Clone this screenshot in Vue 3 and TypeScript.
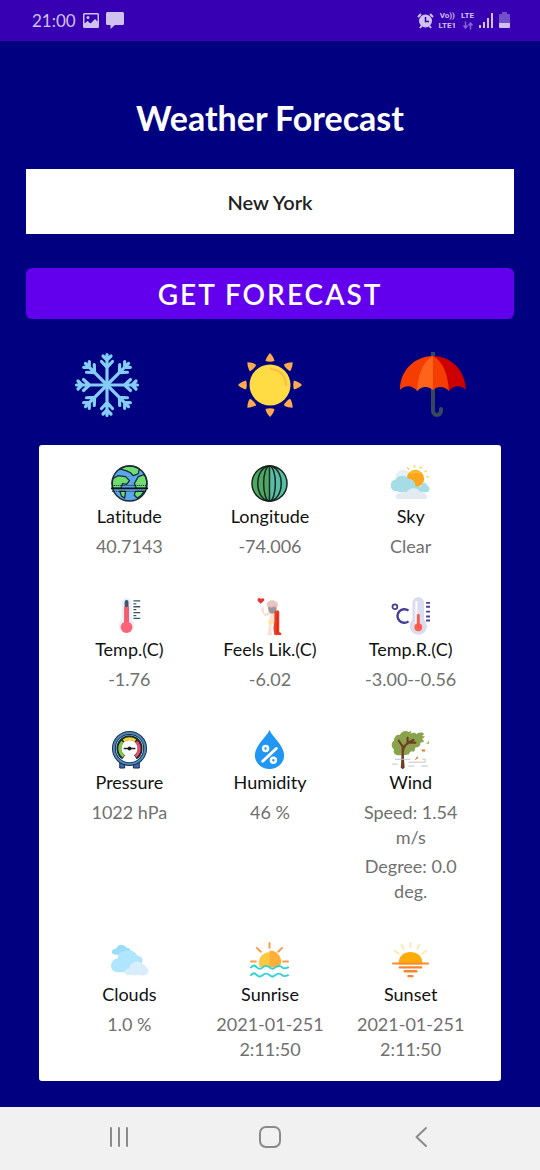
<script setup lang="ts">
import { ref } from 'vue'

type IconName =
  | 'latitude' | 'longitude' | 'sky' | 'temp' | 'feels' | 'range'
  | 'pressure' | 'humidity' | 'wind' | 'clouds' | 'sunrise' | 'sunset'

interface Reading {
  icon: IconName
  label: string
  values: string[][]
}

const city = ref('New York')

const readings: Reading[] = [
  { icon: 'latitude', label: 'Latitude', values: [['40.7143']] },
  { icon: 'longitude', label: 'Longitude', values: [['-74.006']] },
  { icon: 'sky', label: 'Sky', values: [['Clear']] },
  { icon: 'temp', label: 'Temp.(C)', values: [['-1.76']] },
  { icon: 'feels', label: 'Feels Lik.(C)', values: [['-6.02']] },
  { icon: 'range', label: 'Temp.R.(C)', values: [['-3.00--0.56']] },
  { icon: 'pressure', label: 'Pressure', values: [['1022 hPa']] },
  { icon: 'humidity', label: 'Humidity', values: [['46 %']] },
  { icon: 'wind', label: 'Wind', values: [['Speed: 1.54', 'm/s'], ['Degree: 0.0', 'deg.']] },
  { icon: 'clouds', label: 'Clouds', values: [['1.0 %']] },
  { icon: 'sunrise', label: 'Sunrise', values: [['2021-01-251', '2:11:50']] },
  { icon: 'sunset', label: 'Sunset', values: [['2021-01-251', '2:11:50']] },
]

const eighths = [0, 45, 90, 135, 180, 225, 270, 315]
</script>

<template>
  <div class="screen">
    <header class="status">
      <div class="status-side">
        <span class="clock">21:00</span>
        <svg class="s-photo" viewBox="0 0 16 16" aria-hidden="true">
          <path fill="currentColor" fill-rule="evenodd" d="M1.500 0h13A1.500 1.500 0 0 1 16 1.500v12a1.500 1.500 0 0 1-1.500 1.500h-13A1.500 1.500 0 0 1 0 13.500v-12A1.500 1.500 0 0 1 1.500 0zM1.500 1.500v9L4.500 8l3 2.500L12 6l2.500 2.500v-7zM5 3a1.500 1.500 0 1 1 0 3a1.500 1.500 0 0 1 0-3z" />
        </svg>
        <svg class="s-chat" viewBox="0 0 18 17" aria-hidden="true">
          <path fill="currentColor" d="M1.500 0h15A1.500 1.500 0 0 1 18 1.500v10a1.500 1.500 0 0 1-1.500 1.500H9l-4.500 4v-4h-3A1.500 1.500 0 0 1 0 11.500v-10A1.500 1.500 0 0 1 1.500 0z" />
        </svg>
      </div>
      <div class="status-side right">
        <svg class="s-alarm" viewBox="0 0 17 17" aria-hidden="true">
          <circle cx="8.500" cy="9" r="6.500" fill="currentColor" />
          <path d="M1 5l3-3M16 5l-3-3M4.500 14L3 16M12.500 14l1.500 2" stroke="currentColor" stroke-width="2" fill="none" />
          <path d="M8.500 5v4.500h3.500" stroke="#3700b3" stroke-width="1.500" fill="none" />
        </svg>
        <div class="carrier"><span>Vo))</span><span>LTE1</span></div>
        <div class="carrier">
          <span>LTE</span>
          <svg class="s-arrows" viewBox="0 0 12 8" aria-hidden="true">
            <path d="M3.500 0v6M1.500 4l2 2.500l2-2.500M8.500 8V1.500M6.500 4l2-2.500l2 2.500" fill="none" stroke="currentColor" stroke-width="1.500" />
          </svg>
        </div>
        <svg class="s-signal" viewBox="0 0 15 15" aria-hidden="true">
          <path fill="currentColor" d="M0 12h2v3H0zM4 9h2v6H4zM8 5h2v10H8zM12 0h2v15h-2z" />
        </svg>
        <svg class="s-battery" viewBox="0 0 11 17" aria-hidden="true">
          <path d="M3 0h5v2h2a1 1 0 0 1 1 1v8H0V3a1 1 0 0 1 1-1h2z" fill="currentColor" opacity=".4" />
          <path d="M0 11h11v4a1 1 0 0 1-1 1H1a1 1 0 0 1-1-1z" fill="currentColor" />
        </svg>
      </div>
    </header>

    <main class="content">
      <h1>Weather Forecast</h1>
      <input v-model="city" class="city" type="text" aria-label="City" />
      <button class="submit" type="button">GET FORECAST</button>

      <div class="hero">
        <svg viewBox="0 0 66 66" aria-hidden="true">
          <g fill="none" stroke="#84cdf5" stroke-width="3.200" stroke-linecap="round" stroke-linejoin="round">
            <path v-for="a in eighths" :key="a" :transform="`rotate(${a} 33 33)`" d="M33 33V2.500M29 4l4 4l4-4M27.500 9.500l5.500 6l5.500-6" />
          </g>
        </svg>
        <svg viewBox="0 0 66 66" aria-hidden="true">
          <path v-for="a in eighths" :key="a" :transform="`rotate(${a} 33 33)`" fill="#ffaa4d" d="M33 1C35 3 37 6 37.500 9C35 10 31 10 28.500 9C29 6 31 3 33 1z" />
          <circle cx="33" cy="33" r="20.500" fill="#ffdc43" />
          <path d="M34 17C44 18 49 25 49 33" fill="none" stroke="#ffb84a" stroke-width="2" stroke-linecap="round" />
        </svg>
        <svg viewBox="0 0 66 66" aria-hidden="true">
          <path d="M33 1v58a4 4 0 0 0 8 0v-2" fill="none" stroke="#34495e" stroke-width="4" stroke-linecap="round" />
          <path d="M0 36C1 16 17 4 33 4L28 34C23 33 20 35 17 39C12 33 5 33 0 38z" fill="#f53d00" />
          <path d="M33 4C49 4 65 16 66 38C61 33 54 33 49 39L43 20z" fill="#cc0000" />
          <path d="M33 4C22 10 18 24 17 39C22 34 28 34 33 38z" fill="#ff641a" />
          <path d="M33 4C44 10 48 24 49 39C44 34 38 34 33 38z" fill="#f53d00" />
        </svg>
      </div>

      <section class="card">
        <article v-for="item in readings" :key="item.label" class="cell">
          <svg v-if="item.icon === 'latitude'" viewBox="0 0 40 40" aria-hidden="true">
            <circle cx="20" cy="20" r="18" fill="#5ba6ea" />
            <g fill="#70dd73" stroke="#172a30" stroke-width="1.300" stroke-linejoin="round">
              <path d="M10 5C16 1 25 1 30 5l-1 5l-5 2l-3-3l-4-2z" />
              <path d="M3 15L8 12l8 1l4 4l-3 4l-4-1l-2 5H3C2 21 2 18 3 15z" />
              <path d="M29 13l6-2C38 15 38 21 37 25H27l-2-5z" />
              <path d="M10 28h6l-1 7l-3-2zM26 28h9c-2 4-5 6-7 7l-3-3z" />
            </g>
            <circle cx="20" cy="20" r="18" fill="none" stroke="#182a32" stroke-width="1.500" />
            <path d="M1 25h38" stroke="#111" stroke-width="2" /><path d="M2 22h36M2 28h36" stroke="#111" stroke-width="1" stroke-dasharray="1 1" />
          </svg>

          <svg v-else-if="item.icon === 'longitude'" viewBox="0 0 40 40" aria-hidden="true">
            <circle cx="20" cy="20" r="18" fill="#4fa764" />
            <path d="M20 2a18 18 0 0 1 0 36z" fill="#58bca6" />
            <g fill="none" stroke="#15241d" stroke-width="1.500">
              <circle cx="20" cy="20" r="18" /><ellipse cx="20" cy="20" rx="12" ry="18" /><ellipse cx="20" cy="20" rx="6" ry="18" /><path d="M20 2v36" />
            </g>
          </svg>

          <svg v-else-if="item.icon === 'sky'" viewBox="0 0 40 40" aria-hidden="true">
            <path d="M5 17c-2-6 2-11 8-11c5 0 8 4 9 8z" fill="#e5f0f7" />
            <g stroke="#ffd23e" stroke-width="1.500" stroke-linecap="round"><path d="M24 2v1M17 4l1 1M31 3l-1 1M36 7l-1 1M38 13h-1" /></g>
            <circle cx="25" cy="15" r="9" fill="#fda61b" /><path d="M18 10a9 9 0 0 1 14 0c-5-2-10 0-14 0z" fill="#ffbd2d" />
            <path d="M6 28a6 6 0 0 1-1-12c2-5 10-5 13-1c5 0 7 4 7 8h6c0-5 5-5 6-1c4 1 3 7-1 7H9z" fill="#a6dce6" />
            <path d="M8 36c-5 0-5-6 1-6c2-2 5-2 7-1c3-6 12-5 14 0c4 0 6 1 6 3c3 2 1 4-2 4z" fill="#e3eaf2" />
          </svg>

          <svg v-else-if="item.icon === 'temp'" viewBox="0 0 40 40" aria-hidden="true">
            <path d="M12 6a5 5 0 0 1 10 0v17a8 8 0 1 1-10 0z" fill="#e8f1fb" />
            <path d="M15 5a2 2 0 0 1 4 0v22h-4z" fill="#405569" /><path d="M14.500 10h5v18h-5z" fill="#f75d70" /><circle cx="17" cy="31" r="6" fill="#ff6377" />
            <path d="M24 4h7M24 7h3M24 10h7M24 13h3M24 16h7M24 19h3M24 22h7" stroke="#405569" stroke-width="1.300" />
          </svg>

          <svg v-else-if="item.icon === 'feels'" viewBox="0 0 40 40" aria-hidden="true">
            <path d="M11 7L8 4c-1-3 2-4 3-2c2-2 5 0 3 2z" fill="#ef3030" />
            <path d="M12 10l2 1l1 7l5-4l6 1v11l-4 3v7l1 3h-5l2-12v-6l1-3l-6 2l-4-7z" fill="#fbdfd2" />
            <circle cx="23" cy="10" r="5" fill="#efb8a7" />
            <path d="M17 9c-1-7 11-8 12 0l-4-1l-3 1l-3 1z" fill="#e5c7c7" />
            <path d="M19 10l3 1l2-1l3 1c0 4-1 6-4 6s-5-3-4-7z" fill="#98969b" />
            <path d="M25 15c2-2 5-2 5 1v20l2 1v2h-7l-1-7l1-7z" fill="#ef3c20" />
            <path d="M28 17v20" stroke="#cf231b" stroke-width="1" />
            <path d="M19 23l5 2l-1 3h-4z" fill="#fee4a0" />
          </svg>

          <svg v-else-if="item.icon === 'range'" viewBox="0 0 40 40" aria-hidden="true">
            <path d="M22 6a6 6 0 0 1 12 0v17a9 9 0 1 1-12 0z" fill="#dcdcf0" />
            <path d="M26 5v24" stroke="#fff" stroke-width="2" stroke-linecap="round" /><circle cx="28" cy="31" r="4" fill="#fd6252" /><path d="M28 19v12" stroke="#fb594b" stroke-width="3" stroke-linecap="round" />
            <circle cx="4" cy="10" r="2.500" fill="none" stroke="#483f97" stroke-width="1.800" /><path d="M18 14a7 7 0 1 0 0 11" fill="none" stroke="#483f97" stroke-width="2.500" />
            <path d="M36 6h4M36 10h4M36 15h4M36 20h4M36 24h4" stroke="#483f97" stroke-width="2" />
          </svg>

          <svg v-else-if="item.icon === 'pressure'" viewBox="0 0 40 40" aria-hidden="true">
            <path d="M10 32h5v7h-5zM24 32h6v7h-6z" fill="#4267bf" stroke="#172639" />
            <circle cx="20" cy="19" r="16" fill="#fff" stroke="#17334b" stroke-width="4" /><circle cx="20" cy="19" r="16" fill="none" stroke="#4c87bd" stroke-width="2" />
            <g fill="none">
              <path d="M14 28A11 11 0 1 1 26 28" stroke="#172d31" stroke-width="5" />
              <path d="M14 27a10 10 0 0 1-1-15" stroke="#82cb48" stroke-width="3" />
              <path d="M14 11a10 10 0 0 1 12 0" stroke="#f7d636" stroke-width="3" />
              <path d="M27 12a10 10 0 0 1-1 15" stroke="#ef496d" stroke-width="3" />
            </g>
            <path d="M14 19h12" stroke="#182125" stroke-width="1.500" /><circle cx="20" cy="19" r="2" fill="#182125" />
          </svg>

          <svg v-else-if="item.icon === 'humidity'" viewBox="0 0 40 40" aria-hidden="true">
            <path d="M20 0C17 7 5 16 5 26a15 14 0 0 0 30 0C35 16 23 7 20 0z" fill="#2196f3" />
            <g fill="none" stroke="#fff"><circle cx="16" cy="19" r="2.500" stroke-width="2.500" /><circle cx="24" cy="31" r="2.500" stroke-width="2.500" /><path d="M27 19L13 32" stroke-width="3" stroke-linecap="round" /></g>
          </svg>

          <svg v-else-if="item.icon === 'wind'" viewBox="0 0 40 40" aria-hidden="true">
            <path d="M8 26C4 26 2 23 3 20C0 17 0 13 3 11C3 7 6 4 9 5C11 1 15 0 18 2L21 1l-1 3C23 2 25 3 26 4C29 2 32 2 34 4l-2 2l3 1l-3 2l2 3l-4 1c1 3-2 5-5 5l-1 4h-4l-2 3l-5 1z" fill="#8ba34d" />
            <path d="M12 39V17M12 24c0-8 4-10 11-14M8 11l4 6M17 14V8M18 13h7" fill="none" stroke="#6f3d25" stroke-width="2.200" stroke-linecap="round" />
            <path d="M10 39l1-14h2l1 14z" fill="#6f3d25" />
            <path d="M4 30h16M18 33h17v-3h-3M1 35h6M17 37h7M31 37h7" fill="none" stroke="#bcc2c8" stroke-width="1" />
            <path d="M31 20h4v2h-3zM24 31l3-4l1 2z" fill="#e47a2a" /><path d="M36 14l3-3v3z" fill="#a4b749" />
          </svg>

          <svg v-else-if="item.icon === 'clouds'" viewBox="0 0 40 40" aria-hidden="true">
            <path d="M6 13c-6 0-5-6 0-6c2-5 8-6 11-1c4-1 6 5 3 7z" fill="#99ddf8" />
            <path d="M7 31c-8-1-8-13 1-14c-1-9 16-12 20-3c5 0 7 5 4 8c7 2 4 9-1 9z" fill="#afe5ff" />
            <path d="M18 34c-5-2-2-7 2-7c0-8 13-9 15-2c8 2 4 11-2 9z" fill="#d9edfd" />
          </svg>

          <svg v-else-if="item.icon === 'sunrise'" viewBox="0 0 40 40" aria-hidden="true">
            <path d="M20 1v5M7 6l4 4M33 6l-4 4M1 20h5M34 20h5" stroke="#fc9c42" stroke-width="2" stroke-linecap="round" />
            <path d="M10 26a11 11 0 1 1 20 0z" fill="#ffc843" /><path d="M20 9a11 11 0 0 1 10 17H20z" fill="#ffaf37" />
            <path d="M1 26c3-3 4-2 6 0s4 2 6 0s5-2 7 0s4 2 6 0s5-2 7 0s4 1 6 0M1 34c3-3 4-2 6 0s4 2 6 0s5-2 7 0s4 2 6 0s5-2 7 0s4 1 6 0" fill="none" stroke="#2fd1db" stroke-width="2" stroke-linecap="round" />
          </svg>

          <svg v-else viewBox="0 0 40 40" aria-hidden="true">
            <path d="M20 1v4M11 3l2 4M29 3l-2 4M4 9l4 3M36 9l-4 3" stroke="#ffe9ae" stroke-width="2" stroke-linecap="round" />
            <path d="M8 23C6 6 34 6 32 23z" fill="#ffac0b" /><path d="M2 22h36" stroke="#f88c32" stroke-width="2" stroke-linecap="round" />
            <path d="M9 26h22M14 30h12M18 35h4" stroke="#f78632" stroke-width="2.500" stroke-linecap="round" />
          </svg>

          <h2>{{ item.label }}</h2>
          <p v-for="(lines, i) in item.values" :key="i">
            <span v-for="line in lines" :key="line">{{ line }}</span>
          </p>
        </article>
      </section>
    </main>

    <nav class="nav">
      <button type="button" aria-label="Recent apps">
        <svg viewBox="0 0 24 24" aria-hidden="true"><path d="M4 3v18M12 3v18M20 3v18" /></svg>
      </button>
      <button type="button" aria-label="Home">
        <svg viewBox="0 0 24 24" aria-hidden="true"><rect x="2" y="2" width="20" height="20" rx="6" /></svg>
      </button>
      <button type="button" aria-label="Back">
        <svg viewBox="0 0 24 24" aria-hidden="true"><path d="M17 3L7.500 12L17 21" /></svg>
      </button>
    </nav>
  </div>
</template>

<style>
body {
  margin: 0;
  background: #000080;
}
</style>

<style scoped>
.screen {
  display: flex;
  flex-direction: column;
  min-height: 100vh;
  background: #000080;
  font-family: Lato, sans-serif;
  font-variant-ligatures: none;
}
.status {
  display: flex;
  align-items: center;
  justify-content: space-between;
  height: 41px;
  padding: 0 30px 0 32px;
  background: #3700b3;
  color: #d0c2ef;
}
.status-side {
  display: flex;
  align-items: center;
  gap: 7px;
}
.status-side.right {
  gap: 5px;
}
.clock {
  font-size: 17px;
  line-height: 24px;
}
.carrier {
  display: flex;
  flex-direction: column;
  align-items: center;
  font: 700 8px/10px Roboto, sans-serif;
}
.s-photo { width: 16px; height: 16px; }
.s-chat { width: 18px; height: 17px; }
.s-alarm { width: 17px; height: 17px; }
.s-arrows { width: 12px; height: 9px; opacity: .5; }
.s-signal { width: 15px; height: 15px; }
.s-battery { width: 11px; height: 17px; }

.content {
  display: flex;
  flex: 1;
  flex-direction: column;
  padding: 53px 26px 26px;
}
h1 {
  margin: 0 0 27px;
  color: #fff;
  font-size: 34px;
  font-weight: 700;
  line-height: 48px;
  text-align: center;
}
.city {
  box-sizing: border-box;
  width: 100%;
  height: 65px;
  margin: 0 0 34px;
  border: 0;
  border-radius: 0;
  background: #fff;
  color: #212121;
  font: 600 20px/28px Lato, sans-serif;
  text-align: center;
}
.submit {
  height: 51px;
  padding: 0;
  border: 0;
  border-radius: 6px;
  background: #6200ee;
  color: #fff;
  font: 600 28px/40px Lato, sans-serif;
  letter-spacing: 2px;
}
.hero {
  display: grid;
  grid-template-columns: repeat(3, 1fr);
  justify-items: center;
  margin: 33px 0 27px;
}
.hero svg {
  width: 66px;
  height: 66px;
}
.card {
  display: grid;
  grid-template-columns: repeat(3, 1fr);
  margin: 0 13px;
  padding: 0 20px;
  border-radius: 3px;
  background: #fff;
}
.cell {
  display: flex;
  flex-direction: column;
  align-items: center;
  padding: 19px 0;
  text-align: center;
}
.cell svg {
  width: 39px;
  height: 39px;
}
h2 {
  margin: 0;
  color: #111;
  font-size: 18px;
  font-weight: 400;
  line-height: 27px;
}
p {
  margin: 4px 0 0;
  color: #707070;
  font-size: 18px;
  line-height: 25px;
}
p span {
  display: block;
}
.nav {
  display: grid;
  box-sizing: border-box;
  grid-template-columns: repeat(3, 1fr);
  align-items: center;
  height: 63px;
  padding: 0 44px 4px;
  background: #f1f1f1;
}
.nav button {
  display: flex;
  justify-content: center;
  padding: 12px 0;
  border: 0;
  background: none;
}
.nav svg {
  width: 24px;
  height: 24px;
  fill: none;
  stroke: #8a8a8a;
  stroke-width: 2;
  stroke-linecap: round;
  stroke-linejoin: round;
}
</style>
